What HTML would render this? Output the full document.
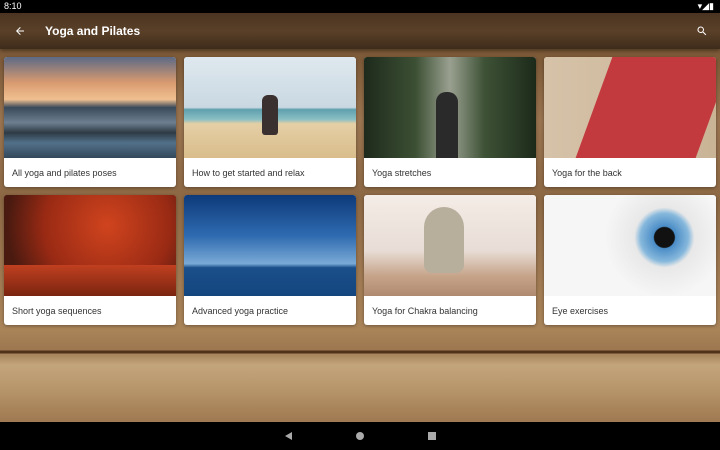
<!DOCTYPE html>
<html><head><meta charset="utf-8"><style>
*{margin:0;padding:0;box-sizing:border-box}
body{width:720px;height:450px;overflow:hidden;position:relative;font-family:"Liberation Sans",sans-serif;
background:
linear-gradient(180deg,rgba(0,0,0,0) 0,rgba(0,0,0,0) 350px,rgba(60,30,10,.8) 351px,rgba(60,30,10,.8) 353px,rgba(0,0,0,0) 354px),
linear-gradient(180deg,#8a6440 0,#7d5a38 60px,#9a7450 120px,#8c6844 200px,#a07a52 280px,#a98459 330px,#9c774f 350px,#c3a57c 365px,#b7956a 390px,#a07a52 420px);}
.sb{position:absolute;left:0;top:0;width:720px;height:13px;background:#000;color:#fff;font-size:9px;line-height:13px;padding-left:4px}
.ab{position:absolute;left:0;top:13px;width:720px;height:36px;background:linear-gradient(180deg,#4a3421,#5a4028 50%,#3e2c1b);box-shadow:0 2px 4px rgba(0,0,0,.4)}
.ab .t{position:absolute;left:45px;top:11px;color:#fff;font-size:12px;font-weight:bold}
.card{position:absolute;width:172px;height:130px;background:#fff;border-radius:3px;overflow:hidden;box-shadow:0 1px 3px rgba(0,0,0,.35)}
.card .img{height:101px}
.card .c{position:absolute;left:8px;top:111px;font-size:9px;color:#333}
.nav{position:absolute;left:0;top:422px;width:720px;height:28px;background:#000}
</style></head><body>
<div class="sb">8:10<span style="position:absolute;right:6px;top:0">▾◢▮</span></div>
<div class="ab">
<svg style="position:absolute;left:14px;top:12px" width="12" height="12" viewBox="0 0 24 24"><path d="M20 11H7.8l5.6-5.6L12 4l-8 8 8 8 1.4-1.4L7.8 13H20z" fill="#fff"/></svg>
<div class="t">Yoga and Pilates</div>
<svg style="position:absolute;left:696px;top:12px" width="12" height="12" viewBox="0 0 24 24"><path d="M15.5 14h-.8l-.3-.3A6.5 6.5 0 1 0 9.5 16c1.6 0 3.1-.6 4.2-1.6l.3.3v.8l5 5 1.5-1.5zm-6 0A4.5 4.5 0 1 1 14 9.5 4.5 4.5 0 0 1 9.5 14z" fill="#fff"/></svg>
</div>

<div class="card" style="left:4px;top:57px"><div class="img" style="background:linear-gradient(180deg,#5c6a86 0,#d89a70 25%,#f0c090 42%,#3a4a5a 50%,#6d7f90 65%,#2e3a44 75%,#52708a 85%,#34485a 100%)"></div><div class="c">All yoga and pilates poses</div></div>
<div class="card" style="left:184px;top:57px"><div class="img" style="background:linear-gradient(180deg,#dfe8ee 0,#c9d8e2 50%,#5ea0ae 52%,#8cc0c4 62%,#e5cfa5 66%,#d9bd8c 100%)"><div style="position:relative;left:78px;top:38px;width:16px;height:40px;background:#3a3030;border-radius:6px 6px 3px 3px"></div></div><div class="c">How to get started and relax</div></div>
<div class="card" style="left:364px;top:57px"><div class="img" style="background:linear-gradient(90deg,#1e2a1c,#3c5034 30%,#9aa090 50%,#3e5236 70%,#1c2a1a)"><div style="position:relative;left:72px;top:35px;width:22px;height:66px;background:#2a2a2a;border-radius:10px 10px 0 0"></div></div><div class="c">Yoga stretches</div></div>
<div class="card" style="left:544px;top:57px"><div class="img" style="background:linear-gradient(90deg,#d6c2a8,#c9b496)"><div style="position:relative;left:50px;top:0;width:120px;height:101px;background:#c23a3e;transform:skewX(-20deg)"></div></div><div class="c">Yoga for the back</div></div>

<div class="card" style="left:4px;top:195px"><div class="img" style="background:radial-gradient(circle at 60% 30%,#d0441e,#9a2a14 50%,#4a1a10 80%),#6a2010"><div style="position:relative;left:0;top:70px;width:172px;height:31px;background:linear-gradient(180deg,#c04020,#7a2410)"></div></div><div class="c">Short yoga sequences</div></div>
<div class="card" style="left:184px;top:195px"><div class="img" style="background:linear-gradient(180deg,#0e3a7a 0,#2e6ab0 40%,#7aaad6 68%,#1a4f8a 72%,#14467e 100%)"></div><div class="c">Advanced yoga practice</div></div>
<div class="card" style="left:364px;top:195px"><div class="img" style="background:linear-gradient(180deg,#f4ece6 0,#e8ddd6 55%,#c6a48a 80%,#b08a70 100%)"><div style="position:relative;left:60px;top:12px;width:40px;height:66px;background:#b8ae9c;border-radius:20px 20px 8px 8px"></div></div><div class="c">Yoga for Chakra balancing</div></div>
<div class="card" style="left:544px;top:195px"><div class="img" style="background:radial-gradient(circle at 70% 42%,#111 0,#111 10px,#4a8cc6 11px,#86b8dc 24px,#e8e8e8 30px,#f6f6f6 60px)"></div><div class="c">Eye exercises</div></div>

<div class="nav">
<svg style="position:absolute;left:283px;top:9px" width="10" height="10" viewBox="0 0 10 10"><path d="M9 1v8L2 5z" fill="#aaa"/></svg>
<div style="position:absolute;left:356px;top:10px;width:8px;height:8px;border-radius:50%;background:#aaa"></div>
<div style="position:absolute;left:428px;top:10px;width:8px;height:8px;background:#aaa"></div>
</div>
</body></html>
